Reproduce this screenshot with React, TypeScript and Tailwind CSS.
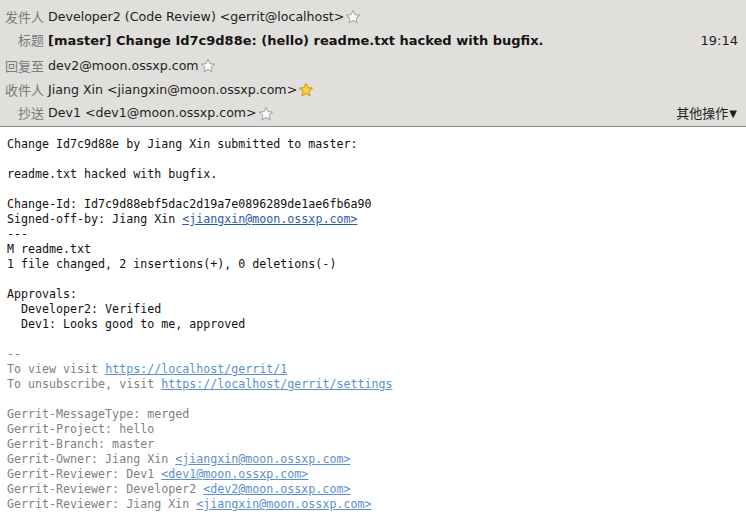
import React from "react";

const Star = ({ filled }: { filled?: boolean }) => (
  <svg width="16" height="16" viewBox="0 0 24 24" className="ml-[1px] shrink-0">
    <path
      d="M12 2.2l2.9 6.2 6.8.8-5 4.7 1.3 6.7L12 17.3 6 20.6l1.3-6.7-5-4.7 6.8-.8z"
      fill={filled ? "#f8d23a" : "#ffffff"}
      stroke={filled ? "#d0a020" : "#a8a8a8"}
      strokeWidth="1.6"
      strokeLinejoin="round"
    />
  </svg>
);

const Row = ({
  label,
  children,
  className = "",
}: {
  label: string;
  children: React.ReactNode;
  className?: string;
}) => (
  <div className={"flex items-center h-[23px] " + className}>
    <div className="w-[44px] shrink-0 text-right text-[13px] text-[#7a7a78]">{label}</div>
    <div className="ml-[4px] flex items-center text-[12.6px] text-[#1e1e1e] min-w-0 flex-1">{children}</div>
  </div>
);

export default function App() {
  const dark = "text-[#111]";
  const gray = "text-[#7f7f7f]";
  const linkDark = "text-[#2b5ca8] underline";
  const linkGray = "text-[#5b8fcf] underline";
  return (
    <div className="w-[746px] h-[520px] overflow-hidden bg-white">
      <div
        className="h-[127px] bg-[#e0dfdc] border-b border-[#8c8c8a] pt-[6px]"
        style={{ fontFamily: '"DejaVu Sans", "Noto Sans CJK SC", sans-serif' }}
      >
        <Row label="发件人">
          <span>Developer2 (Code Review) &lt;gerrit@localhost&gt;</span>
          <Star />
        </Row>
        <Row label="标题">
          <span className="font-bold text-[13px] text-[#151515]">
            [master] Change Id7c9d88e: (hello) readme.txt hacked with bugfix.
          </span>
          <span className="ml-auto mr-[8px] text-[13px]">19:14</span>
        </Row>
        <Row label="回复至" className="mt-[3px]">
          <span>dev2@moon.ossxp.com</span>
          <Star />
        </Row>
        <Row label="收件人" className="mt-[1px]">
          <span>Jiang Xin &lt;jiangxin@moon.ossxp.com&gt;</span>
          <Star filled />
        </Row>
        <Row label="抄送">
          <span>Dev1 &lt;dev1@moon.ossxp.com&gt;</span>
          <Star />
          <span className="ml-auto mr-[9px] flex items-center text-[13px]">
            其他操作
            <span className="text-[10px] ml-[1px]">▼</span>
          </span>
        </Row>
      </div>
      <div
        className="pl-[7px] pt-[10px] text-[11.65px] leading-[15px] whitespace-pre"
        style={{ fontFamily: '"DejaVu Sans Mono", monospace' }}
      >
        <div className={dark}>Change Id7c9d88e by Jiang Xin submitted to master:</div>
        <div>&nbsp;</div>
        <div className={dark}>readme.txt hacked with bugfix.</div>
        <div>&nbsp;</div>
        <div className={dark}>Change-Id: Id7c9d88ebf5dac2d19a7e0896289de1ae6fb6a90</div>
        <div className={dark}>
          Signed-off-by: Jiang Xin <span className={linkDark}>&lt;jiangxin@moon.ossxp.com&gt;</span>
        </div>
        <div className={dark}>---</div>
        <div className={dark}>M readme.txt</div>
        <div className={dark}>1 file changed, 2 insertions(+), 0 deletions(-)</div>
        <div>&nbsp;</div>
        <div className={dark}>Approvals:</div>
        <div className={dark}>  Developer2: Verified</div>
        <div className={dark}>  Dev1: Looks good to me, approved</div>
        <div>&nbsp;</div>
        <div className={gray}>--</div>
        <div className={gray}>
          To view visit <span className={linkGray}>https://localhost/gerrit/1</span>
        </div>
        <div className={gray}>
          To unsubscribe, visit <span className={linkGray}>https://localhost/gerrit/settings</span>
        </div>
        <div>&nbsp;</div>
        <div className={gray}>Gerrit-MessageType: merged</div>
        <div className={gray}>Gerrit-Project: hello</div>
        <div className={gray}>Gerrit-Branch: master</div>
        <div className={gray}>
          Gerrit-Owner: Jiang Xin <span className={linkGray}>&lt;jiangxin@moon.ossxp.com&gt;</span>
        </div>
        <div className={gray}>
          Gerrit-Reviewer: Dev1 <span className={linkGray}>&lt;dev1@moon.ossxp.com&gt;</span>
        </div>
        <div className={gray}>
          Gerrit-Reviewer: Developer2 <span className={linkGray}>&lt;dev2@moon.ossxp.com&gt;</span>
        </div>
        <div className={gray}>
          Gerrit-Reviewer: Jiang Xin <span className={linkGray}>&lt;jiangxin@moon.ossxp.com&gt;</span>
        </div>
      </div>
    </div>
  );
}
